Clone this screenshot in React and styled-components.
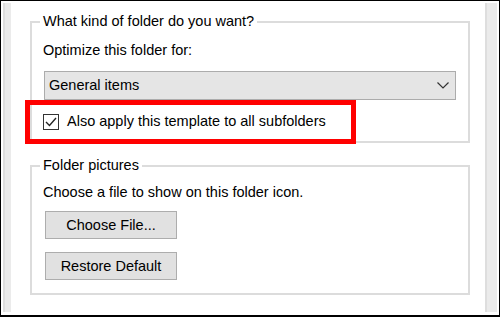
import React from "react";
import styled, { createGlobalStyle } from "styled-components";

const Global = createGlobalStyle`
  html, body { margin: 0; padding: 0; background: #fff; }
  body {
    font-family: "Liberation Sans", Arial, sans-serif;
    font-size: 14.5px;
    color: #000;
  }
`;

const Frame = styled.div`
  position: relative;
  box-sizing: border-box;
  width: 500px;
  height: 317px;
  border: 1px solid #000;
  border-bottom-width: 2px;
  padding: 2px 2px 3px 2px;
  display: flex;
  background: #fff;
`;

const Strip = styled.div`
  flex: none;
  width: ${(p) => p.$w}px;
  background: linear-gradient(90deg, #dedede 0 2px, #ebebeb 2px 100%);
`;

const Content = styled.div`
  flex: 1;
  min-width: 0;
  padding: 10px 15px 0 19px;
`;

const GroupBox = styled.fieldset`
  margin: ${(p) => p.$mt}px 0 0;
  border: 2px solid #dcdcdc;
  padding: ${(p) => p.$pt}px 12px ${(p) => p.$pb}px 11px;
  min-width: 0;
`;

const Legend = styled.legend`
  padding: 0 3px;
  margin-left: -3px;
  line-height: 17px;
`;

const Text = styled.div`
  line-height: 17px;
  white-space: nowrap;
`;

const Select = styled.div`
  box-sizing: border-box;
  margin: 12px 0 0 1px;
  width: 412px;
  height: 29px;
  border: 1px solid #acacac;
  background: #e5e5e5;
  display: flex;
  align-items: center;
  justify-content: space-between;
  padding: 0 6px 0 4px;
  line-height: 17px;
`;

const Chevron = styled.svg`
  width: 12px;
  height: 7px;
  display: block;
`;

const CheckRow = styled.label`
  margin-top: 13px;
  display: flex;
  align-items: center;
  gap: 8px;
  line-height: 17px;
  white-space: nowrap;
`;

const Box = styled.span`
  box-sizing: border-box;
  width: 16px;
  height: 16px;
  border: 1px solid #333;
  background: #fff;
  display: flex;
  align-items: center;
  justify-content: center;
  flex: none;
`;

const Button = styled.button`
  box-sizing: border-box;
  display: block;
  margin: ${(p) => p.$mt}px 0 0 2px;
  width: 132px;
  height: 28px;
  border: 1px solid #adadad;
  background: #e1e1e1;
  font: inherit;
  color: #000;
  padding: 0;
  line-height: 17px;
`;

const Highlight = styled.div`
  position: absolute;
  left: 24px;
  top: 99px;
  width: 331px;
  height: 44px;
  box-sizing: border-box;
  border: 5px solid #f00;
  pointer-events: none;
`;

export default function App() {
  return (
    <>
      <Global />
      <Frame>
        <Strip $w={8} />
        <Content>
          <GroupBox $mt={0} $pt={12} $pb={11}>
            <Legend>What kind of folder do you want?</Legend>
            <Text>Optimize this folder for:</Text>
            <Select>
              <span>General items</span>
              <Chevron viewBox="0 0 12 7">
                <polyline points="0.5,0.5 6,6 11.5,0.5" fill="none" stroke="#333" strokeWidth="1.2" />
              </Chevron>
            </Select>
            <CheckRow>
              <Box>
                <svg width="14" height="14" viewBox="0 0 14 14">
                  <polyline points="2,7 5.5,10.5 12,3" fill="none" stroke="#222" strokeWidth="1.4" />
                </svg>
              </Box>
              <span>Also apply this template to all subfolders</span>
            </CheckRow>
          </GroupBox>
          <GroupBox $mt={14} $pt={10} $pb={13}>
            <Legend>Folder pictures</Legend>
            <Text>Choose a file to show on this folder icon.</Text>
            <Button $mt={10}>Choose File...</Button>
            <Button $mt={13}>Restore Default</Button>
          </GroupBox>
        </Content>
        <Strip $w={12} />
        <Highlight />
      </Frame>
    </>
  );
}
